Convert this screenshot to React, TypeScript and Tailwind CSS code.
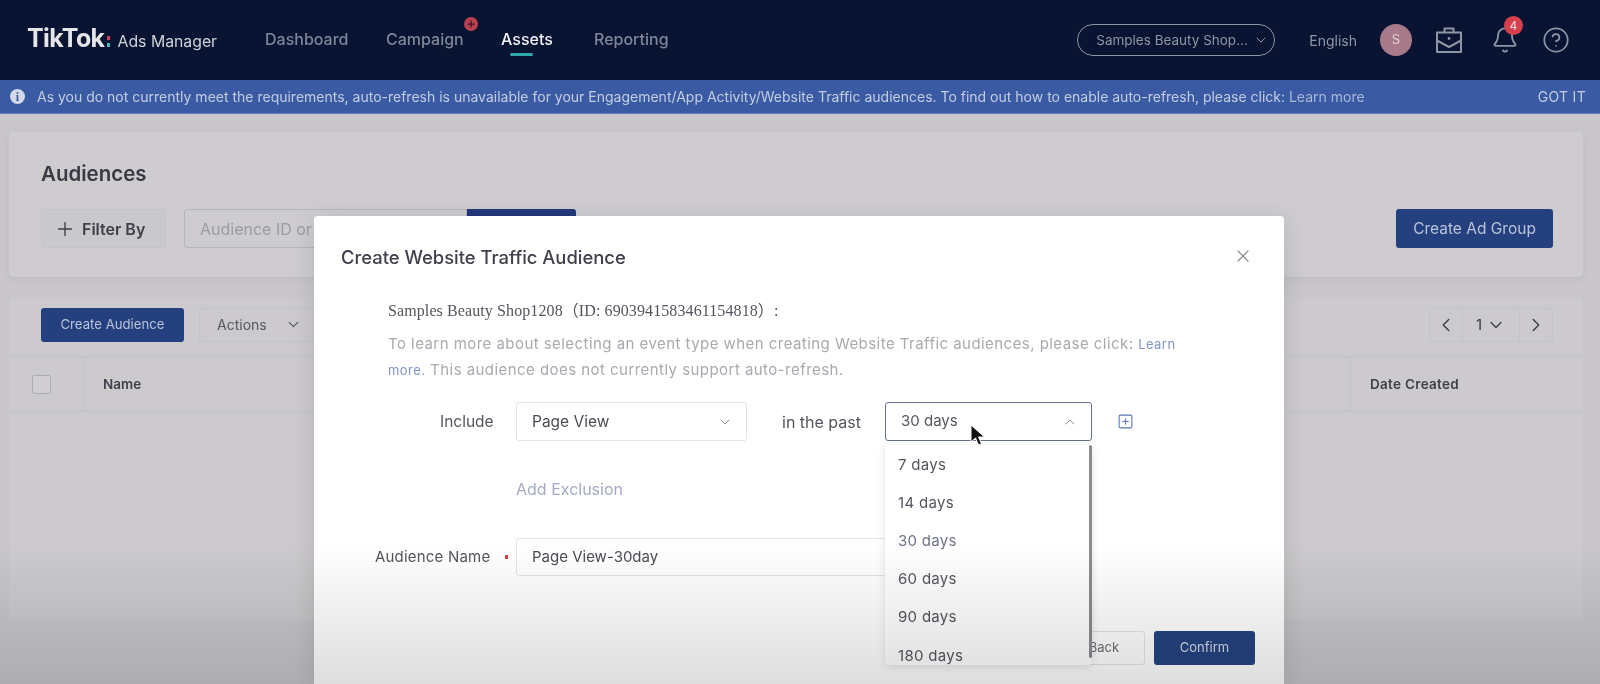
import { Bell, ChevronDown, ChevronLeft, ChevronRight, ChevronUp, CircleHelp, Plus, SquarePlus, X } from "lucide-react";

const NAV = [
  { label: "Dashboard", className: "w-[121px] text-[#80869a]" },
  { label: "Campaign", className: "w-[115px] text-[#80869a]" },
  { label: "Assets", className: "w-[93px] text-[#eef0f4]" },
  { label: "Reporting", className: "w-[80px] text-[#80869a]" },
];

const DAYS = [
  { label: "7 days", className: "h-[38px] text-[#55555f]" },
  { label: "14 days", className: "h-[39px] text-[#55555f]" },
  { label: "30 days", className: "h-[37px] text-[#6f7288]" },
  { label: "60 days", className: "h-[38px] text-[#55555f]" },
  { label: "90 days", className: "h-[39px] text-[#55555f]" },
  { label: "180 days", className: "h-[38px] text-[#55555f]" },
];

function Portfolio() {
  return (
    <svg width="30" height="30" viewBox="0 0 30 30" fill="none" stroke="#8f95a5" strokeWidth="2" strokeLinejoin="round">
      <path d="M3 7.5h24v19.5H3z" />
      <path d="M10.5 7.5V3.5h9v4" />
      <path d="M3 15.5l12 6.5 12-6.5" />
      <circle cx="15" cy="13.5" r="1.4" fill="#8f95a5" stroke="none" />
    </svg>
  );
}

function Header() {
  return (
    <header className="flex h-[80px] items-center bg-[#081431] pl-[27px] pr-[30px]">
      <div className="flex w-[238px] items-baseline">
        <span className="text-[25px] font-bold leading-none tracking-[-0.6px] text-[#e6e6ea]">TikTok</span>
        <span className="mx-[2px] flex flex-col gap-[3px] self-center pt-[3px]">
          <i className="block h-[4px] w-[3px] bg-[#c9485f]" />
          <i className="block h-[4px] w-[3px] bg-[#3fb6bb]" />
        </span>
        <span className="ml-[6px] text-[15.8px] text-[#d0d2d9]">Ads Manager</span>
      </div>
      <nav className="flex items-center pb-[2px] text-[16px] font-medium">
        {NAV.map((item) => (
          <div key={item.label} className={`relative py-2 ${item.className}`}>
            {item.label}
            {item.label === "Campaign" && (
              <span className="absolute left-[78px] top-[-2px] flex h-[14px] w-[14px] items-center justify-center rounded-full bg-[#b8404f] text-[#3a1420]">
                <Plus size={10} strokeWidth={3} />
              </span>
            )}
            {item.label === "Assets" && <span className="absolute bottom-[3px] left-[9px] h-[3px] w-[23px] rounded-full bg-[#2fa7ab]" />}
          </div>
        ))}
      </nav>
      <div className="ml-auto flex items-center">
        <div className="flex h-[32px] w-[198px] items-center gap-[5px] whitespace-nowrap rounded-full border-[1.5px] border-[#8f95a5] pl-[18px] text-[13.5px] text-[#8f95a5]">
          Samples Beauty Shop...
          <ChevronDown size={16} strokeWidth={1.5} />
        </div>
        <span className="ml-[34px] text-[14px] text-[#8f95a5]">English</span>
        <span className="ml-[23px] flex h-[32px] w-[32px] items-center justify-center rounded-full bg-[#a87a8a] text-[13px] text-[#ded3d8]">S</span>
        <span className="ml-[22px] flex"><Portfolio /></span>
        <span className="relative ml-[27px] flex">
          <Bell size={28} strokeWidth={1.6} className="text-[#8f95a5]" />
          <span className="absolute left-[13px] top-[-10px] flex h-[19px] w-[19px] items-center justify-center rounded-full bg-[#d6404c] text-[12px] text-[#f2dadc]">4</span>
        </span>
        <span className="ml-[23px] flex"><CircleHelp size={28} strokeWidth={1.5} className="text-[#8f95a5]" /></span>
      </div>
    </header>
  );
}

function Banner() {
  return (
    <div className="flex h-[34px] items-center border-b border-[#5f7fc0] bg-[#3a5ba3] pl-[10px] pr-[14px] text-[14px] text-[#c3cde2]">
      <span className="flex h-[15px] w-[15px] items-center justify-center rounded-full bg-[#d3d9e8] font-['Liberation_Serif',serif] text-[12px] font-bold text-[#3a5ba3]">i</span>
      <span className="ml-[12px]">
        As you do not currently meet the requirements, auto-refresh is unavailable for your Engagement/App Activity/Website Traffic audiences. To find out how to enable auto-refresh, please click: <span className="text-[#a9b8d8]">Learn more</span>
      </span>
      <span className="ml-auto tracking-[0.3px]">GOT IT</span>
    </div>
  );
}

function Background() {
  return (
    <main className="flex flex-col gap-[20px] pl-[9px] pr-[17px] pt-[18px]">
      <section className="h-[145px] rounded-[4px] bg-[#cecccf] pl-[32px] pr-[30px] pt-[29px] shadow-[0_2px_6px_rgba(0,0,0,0.05)]">
        <h1 className="text-[20.5px] font-semibold leading-[26px] text-[#3a3a44]">Audiences</h1>
        <div className="mt-[22px] flex items-start">
          <div className="flex h-[39px] w-[125px] items-center gap-[6px] rounded-[3px] border border-[#c4c3c9] bg-[#c9c8cc] pl-[12px] text-[16px] font-semibold text-[#3f3f49]">
            <Plus size={22} strokeWidth={1.5} />
            Filter By
          </div>
          <div className="ml-[18px] flex h-[39px] w-[283px] items-center rounded-l-[3px] border border-[#b5b4ba] pl-[15px] text-[16px] text-[#9c9ba3]">Audience ID or Name</div>
          <div className="h-[39px] w-[109px] rounded-r-[3px] bg-[#22397a]" />
          <button className="ml-auto h-[39px] w-[157px] rounded-[3px] bg-[#25407f] text-[15.5px] text-[#b9c3da]">Create Ad Group</button>
        </div>
      </section>
      <section className="h-[323px] rounded-[4px] bg-[#cccacd]">
        <div className="flex h-[59px] items-center pb-[3px] pl-[32px] pr-[30px]">
          <button className="h-[34px] w-[143px] rounded-[3px] bg-[#25407f] text-[13.2px] text-[#b9c3da]">Create Audience</button>
          <div className="ml-[15px] flex h-[34px] w-[115px] items-center gap-[18px] rounded-[3px] border border-[#c4c3c9] pb-[1px] pl-[17px] text-[14px] text-[#56565f]">
            Actions
            <ChevronDown size={17} strokeWidth={1.5} />
          </div>
          <div className="ml-auto flex h-[34px] w-[124px] items-center rounded-[3px] border border-[#c4c3c9] text-[15px] text-[#3a3a44]">
            <span className="flex w-[32px] justify-center"><ChevronLeft size={22} strokeWidth={1.5} /></span>
            <span className="flex w-[58px] items-center justify-center gap-[4px] self-stretch border-x border-[#c4c3c9]">
              1
              <ChevronDown size={20} strokeWidth={1.5} />
            </span>
            <span className="flex w-[32px] justify-center"><ChevronRight size={22} strokeWidth={1.5} /></span>
          </div>
        </div>
        <div className="flex h-[56px] items-stretch border-y border-[#c3c2c7] text-[13.5px] font-semibold text-[#3f3f49]">
          <div className="flex w-[75px] items-center justify-center border-r border-[#c3c2c7] pr-[10px]">
            <span className="h-[19px] w-[19px] rounded-[2px] border border-[#aeadb4] bg-[#d0ced2]" />
          </div>
          <div className="flex flex-1 items-center pl-[19px]">Name</div>
          <div className="flex w-[233px] items-center border-l border-[#c3c2c7] pl-[19px] tracking-[0.3px]">Date Created</div>
        </div>
      </section>
    </main>
  );
}

function Dropdown() {
  return (
    <div className="absolute left-0 top-[43px] z-10 h-[220px] w-[207px] overflow-hidden rounded-b-[4px] bg-white pl-[13px] pt-[1px] shadow-[0_2px_8px_rgba(0,0,0,0.12)]">
      {DAYS.map((day) => (
        <div key={day.label} className={`flex items-center text-[15px] tracking-[0.3px] ${day.className}`}>{day.label}</div>
      ))}
      <span className="absolute right-0 top-0 h-[213px] w-[3px] rounded-full bg-[#8b8b90]" />
    </div>
  );
}

function Modal() {
  return (
    <div className="absolute left-[314px] top-[216px] flex h-[468px] w-[970px] flex-col rounded-t-[4px] bg-white shadow-[0_4px_24px_rgba(0,0,0,0.12)]">
      <div className="flex items-center justify-between pl-[27px] pr-[31px] pt-[28px]">
        <h2 className="text-[18.4px] font-medium leading-[26px] text-[#40404c]">Create Website Traffic Audience</h2>
        <X size={20} strokeWidth={1.5} className="mb-[3px] text-[#8d8d94]" />
      </div>
      <div className="pl-[74px] pr-[100px] pt-[30px]">
        <p className="font-['Liberation_Serif','Noto_Sans_CJK_SC',serif] text-[16px] leading-[22px] tracking-[0.1px] text-[#55555f]">Samples Beauty Shop1208（ID: 6903941583461154818）:</p>
        <p className="mt-[9px] text-[15px] leading-[25px] tracking-[0.45px] text-[#a9a9b0]">
          To learn more about selecting an event type when creating Website Traffic audiences, please click: <span className="text-[13px] text-[#7f96c4]">Learn more.</span> This audience does not currently support auto-refresh.
        </p>
      </div>
      <div className="flex items-center pl-[126px] pt-[19px] text-[15px] text-[#55555f]">
        <span className="w-[76px] text-[15.5px]">Include</span>
        <div className="flex h-[39px] w-[231px] items-center justify-between rounded-[3px] border border-[#e3e3e8] pl-[15px] pr-[13px] text-[15.5px] text-[#4c4c56]">
          Page View
          <ChevronDown size={16} strokeWidth={1.5} className="text-[#8d8d94]" />
        </div>
        <span className="ml-[35px] w-[103px] text-[16px]">in the past</span>
        <div className="relative h-[39px] w-[207px]">
          <div className="flex h-full items-center justify-between rounded-[3px] border-[1.5px] border-[#66708f] pl-[15px] pr-[13px] text-[#55555f]">
            30 days
            <ChevronUp size={16} strokeWidth={1.5} className="text-[#8d8d94]" />
          </div>
          <Dropdown />
          <svg className="absolute left-[85px] top-[22px] z-20" width="16" height="24" viewBox="0 0 16 24">
            <path d="M1 1v17l4.5-4 3 7 3-1.5-3-6.5h6z" fill="#111" stroke="#fff" strokeWidth="1" />
          </svg>
        </div>
        <SquarePlus size={17} strokeWidth={1.5} className="ml-[25px] text-[#5a76b0]" />
      </div>
      <div className="pl-[202px] pt-[37px] text-[16px] leading-[22px] text-[#a5aac4]">Add Exclusion</div>
      <div className="flex items-center pl-[61px] pt-[38px] text-[15px] tracking-[0.2px] text-[#55555f]">
        <span className="w-[119px]">Audience Name</span>
        <span className="ml-[11px] h-[4px] w-[3px] bg-[#d6404c]" />
        <div className="ml-[8px] flex h-[38px] w-[500px] items-center rounded-[3px] border border-[#e3e3e8] pl-[15px] tracking-normal text-[#4c4c56]">Page View-30day</div>
      </div>
      <div className="flex justify-end gap-[9px] pr-[29px] pt-[55px]">
        <button className="h-[34px] w-[90px] rounded-[3px] border border-[#e3e3e8] pl-[8px] text-[13px] text-[#6b6b74]">Back</button>
        <button className="h-[34px] w-[101px] rounded-[3px] bg-[#24437f] text-[13px] text-[#d4dbea]">Confirm</button>
      </div>
    </div>
  );
}

export default function App() {
  return (
    <div className="relative h-[684px] w-[1600px] overflow-hidden bg-[#c8c6ca] font-['Inter',sans-serif] blur-[0.4px]">
      <Header />
      <Banner />
      <Background />
      <Modal />
      {/* the video player's shade over the bottom of the frame */}
      <div className="pointer-events-none absolute inset-x-0 bottom-0 z-30 h-[140px] bg-gradient-to-b from-black/0 to-black/13" />
    </div>
  );
}
